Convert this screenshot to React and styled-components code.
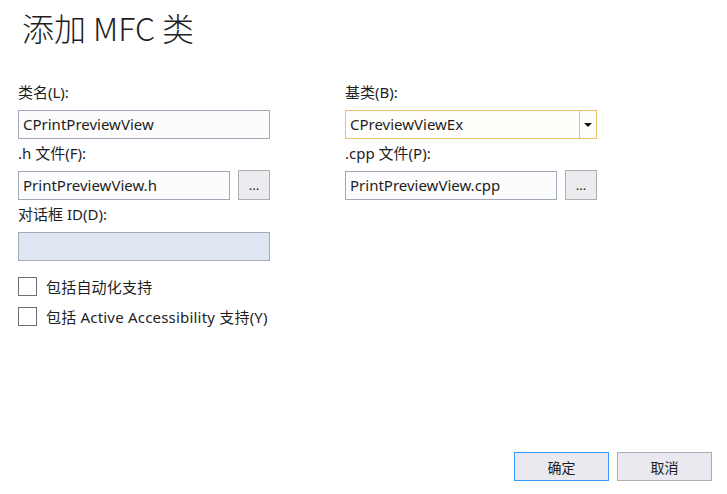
import React from "react";
import styled, { createGlobalStyle } from "styled-components";

const GlobalStyle = createGlobalStyle`
  html, body {
    margin: 0;
    padding: 0;
    background: #ffffff;
  }
  * {
    box-sizing: border-box;
  }
`;

const Dialog = styled.div`
  width: 727px;
  height: 494px;
  display: flex;
  flex-direction: column;
  padding: 6px 15px 13px 18px;
  font-family: "Segoe UI", "Noto Sans", "Noto Sans CJK SC", sans-serif;
  font-size: 15px;
  color: #1e1e1e;
  background: #fff;
`;

const Title = styled.h1`
  margin: 0 0 0 4px;
  font-family: "Noto Sans CJK SC", sans-serif;
  font-weight: 300;
  font-size: 32px;
  line-height: 42px;
  color: #1e1e1e;
`;

const Form = styled.div`
  margin-top: 36px;
  display: grid;
  grid-template-columns: 252px 252px;
  column-gap: 75px;
`;

const Column = styled.div`
  display: flex;
  flex-direction: column;
`;

const Label = styled.div`
  height: 20px;
  line-height: 17px;
  margin-bottom: 6px;
  white-space: nowrap;
`;

const Field = styled.div`
  display: flex;
  gap: 8px;
  margin-bottom: 6px;
`;

const Input = styled.div`
  flex: 1;
  height: 29px;
  line-height: 27px;
  padding: 0 4px;
  border: 1px solid ${(p) => (p.$disabled ? "#a3abb6" : "#a0a9b7")};
  background: ${(p) => (p.$disabled ? "#dfe6f1" : "#fcfcfc")};
  white-space: nowrap;
  overflow: hidden;
`;

const Combo = styled.div`
  flex: 1;
  height: 29px;
  display: flex;
  border: 1px solid #e6c56a;
  background: #fffefb;
`;

const ComboText = styled.div`
  flex: 1;
  line-height: 27px;
  padding: 0 4px;
`;

const ComboArrow = styled.div`
  width: 17px;
  border-left: 1px solid #e6c56a;
  display: flex;
  align-items: center;
  justify-content: center;
  &::after {
    content: "";
    border-left: 4px solid transparent;
    border-right: 4px solid transparent;
    border-top: 4px solid #111;
  }
`;

const Browse = styled.div`
  width: 32px;
  height: 30px;
  margin-top: -1px;
  border: 1px solid #adadad;
  background: #ebebf0;
  display: flex;
  align-items: flex-end;
  justify-content: center;
  padding-bottom: 7px;
  font-size: 13px;
  line-height: 13px;
`;

const Checks = styled.div`
  margin-top: 10px;
  display: flex;
  flex-direction: column;
  gap: 11px;
`;

const CheckRow = styled.label`
  display: flex;
  align-items: center;
  gap: 9px;
  height: 19px;
  letter-spacing: 0.2px;
`;

const Box = styled.span`
  width: 19px;
  height: 19px;
  border: 1px solid #707070;
  background: #fff;
`;

const Footer = styled.div`
  margin-top: auto;
  display: flex;
  justify-content: flex-end;
  gap: 8px;
`;

const Button = styled.div`
  width: 95px;
  height: 29px;
  display: flex;
  align-items: center;
  justify-content: center;
  background: #e9e9ef;
  border: 1px solid ${(p) => (p.$primary ? "#3399ff" : "#adadad")};
  font-family: "Noto Sans CJK SC", sans-serif;
  font-size: 14px;
`;

export default function App() {
  return (
    <>
      <GlobalStyle />
      <Dialog>
        <Title>添加 MFC 类</Title>
        <Form>
          <Column>
            <Label>类名(L):</Label>
            <Field>
              <Input>CPrintPreviewView</Input>
            </Field>
            <Label>.h 文件(F):</Label>
            <Field>
              <Input>PrintPreviewView.h</Input>
              <Browse>...</Browse>
            </Field>
            <Label>对话框 ID(D):</Label>
            <Field>
              <Input $disabled />
            </Field>
          </Column>
          <Column>
            <Label>基类(B):</Label>
            <Field>
              <Combo>
                <ComboText>CPreviewViewEx</ComboText>
                <ComboArrow />
              </Combo>
            </Field>
            <Label>.cpp 文件(P):</Label>
            <Field>
              <Input>PrintPreviewView.cpp</Input>
              <Browse>...</Browse>
            </Field>
          </Column>
        </Form>
        <Checks>
          <CheckRow>
            <Box />
            包括自动化支持
          </CheckRow>
          <CheckRow>
            <Box />
            包括 Active Accessibility 支持(Y)
          </CheckRow>
        </Checks>
        <Footer>
          <Button $primary>确定</Button>
          <Button>取消</Button>
        </Footer>
      </Dialog>
    </>
  );
}
